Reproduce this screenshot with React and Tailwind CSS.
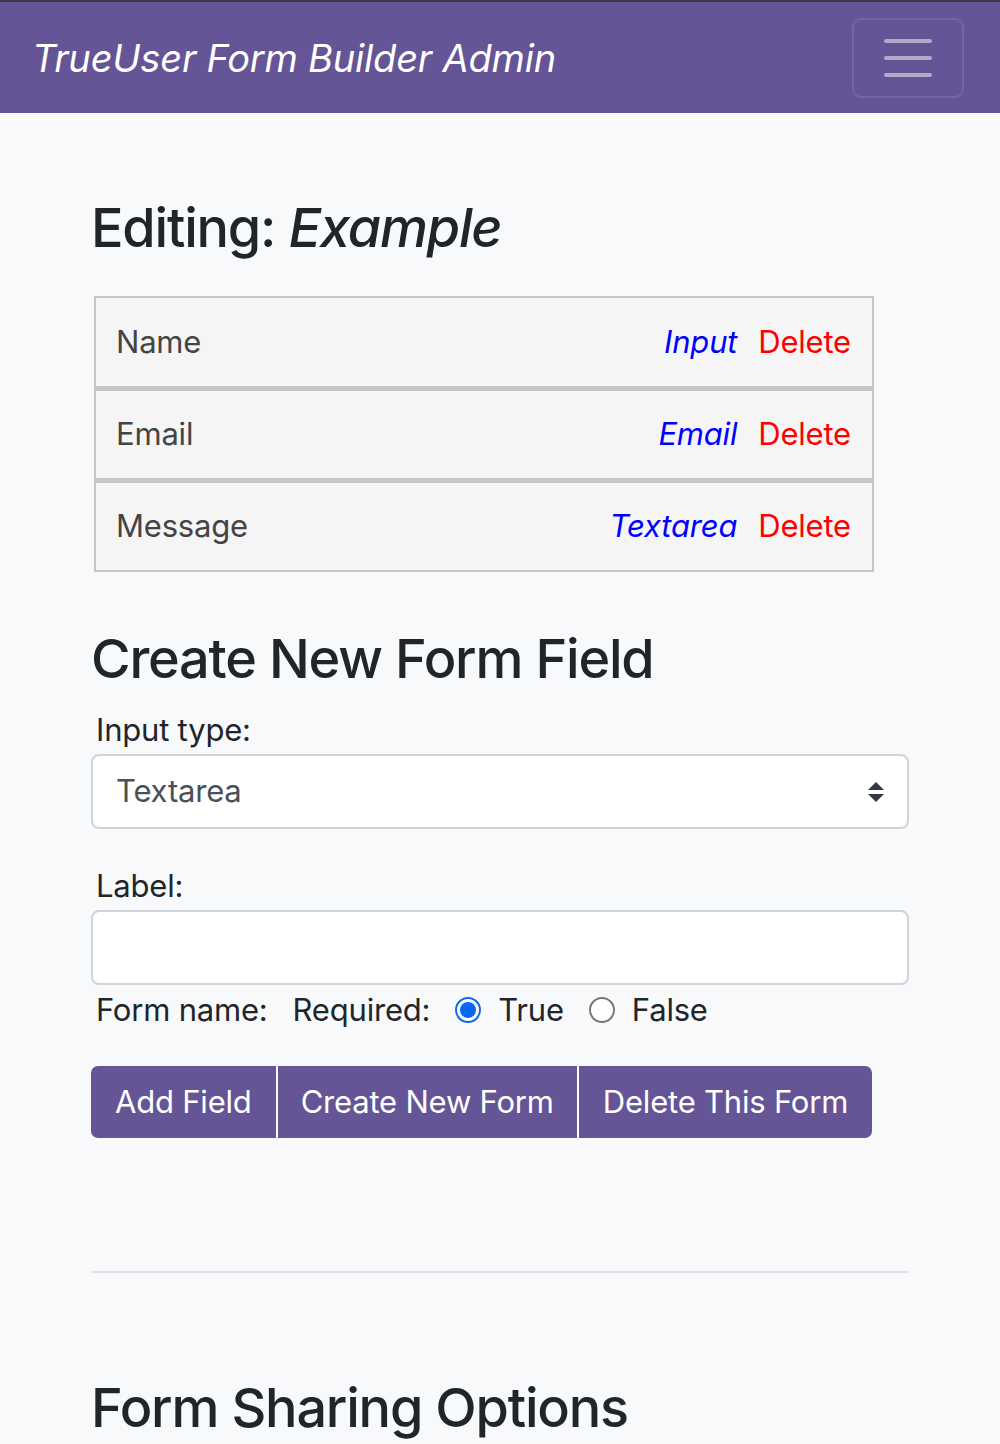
import React from "react";

const rows = [
  { name: "Name", type: "Input" },
  { name: "Email", type: "Email" },
  { name: "Message", type: "Textarea" },
];

export default function App() {
  return (
    <div className="min-h-[1444px] bg-[#f8f9fa] text-[#212529]" style={{ fontFamily: "Inter, 'Noto Sans', sans-serif" }}>
      <nav className="flex h-[113px] items-center justify-between border-t-2 border-[#3d3b48] bg-[#655597] pl-[32px] pr-[36px]">
        <span className="text-[38px] italic leading-none text-white tracking-[-0.2px]">TrueUser Form Builder Admin</span>
        <button className="flex h-[80px] w-[112px] flex-col items-center justify-center gap-[13px] rounded-[9px] border-2 border-white/10">
          <span className="block h-[4px] w-[48px] rounded-full bg-white/50" />
          <span className="block h-[4px] w-[48px] rounded-full bg-white/50" />
          <span className="block h-[4px] w-[48px] rounded-full bg-white/50" />
        </button>
      </nav>

      <main className="px-[91px]">
        <h1 className="mt-[80px] text-[54px] font-medium leading-[70px] tracking-[-1.2px]">
          Editing: <em>Example</em>
        </h1>

        <div className="ml-[3px] mt-[33px] w-[780px]">
          {rows.map((r, i) => (
            <div
              key={r.name}
              className={`flex h-[92px] items-center justify-between border-2 border-[#c6c6c6] bg-[#f5f5f5] pl-[20px] pr-[21px] text-[31px] tracking-[-0.2px] text-[#444] ${i > 0 ? "border-t-[3px]" : ""}`}
            >
              <span>{r.name}</span>
              <span className="flex items-center gap-[21px]">
                <span className="italic text-[#0000ff]">{r.type}</span>
                <span className="text-[#ff0000]">Delete</span>
              </span>
            </div>
          ))}
        </div>

        <h2 className="mt-[52px] text-[54px] font-medium leading-[70px] tracking-[-1.2px]">Create New Form Field</h2>

        <label className="ml-[5px] mt-[12px] block text-[31px] leading-[48px] tracking-[-0.2px]">Input type:</label>
        <div className="flex h-[75px] items-center justify-between rounded-[8px] border-2 border-[#ced4da] bg-white pl-[23px] pr-[22px] text-[31px] tracking-[-0.2px] text-[#495057]">
          <span>Textarea</span>
          <svg width="18" height="22" viewBox="0 0 18 22" className="mt-[1px]">
            <path d="M9 1 L17 9 L1 9 Z" fill="#343a40" />
            <path d="M1 13 L17 13 L9 21 Z" fill="#343a40" />
          </svg>
        </div>

        <label className="ml-[5px] mt-[33px] block text-[31px] leading-[48px] tracking-[-0.2px]">Label:</label>
        <div className="h-[75px] rounded-[8px] border-2 border-[#ced4da] bg-white" />

        <div className="ml-[5px] mt-[1px] flex h-[48px] items-center text-[31px] tracking-[-0.2px]">
          <span>Form name:</span>
          <span className="ml-[25px]">Required:</span>
          <span className="ml-[25px] flex h-[26px] w-[26px] items-center justify-center rounded-full border-2 border-[#0a66f5] bg-white">
            <span className="block h-[16px] w-[16px] rounded-full bg-[#0a66f5]" />
          </span>
          <span className="ml-[17px]">True</span>
          <span className="ml-[25px] block h-[26px] w-[26px] rounded-full border-2 border-[#767676] bg-white" />
          <span className="ml-[17px]">False</span>
        </div>

        <div className="mt-[32px] flex">
          <div className="flex h-[72px] overflow-hidden rounded-[7px] text-[31px] tracking-[-0.2px] text-white">
            <span className="flex items-center bg-[#655597] pl-[24px] pr-[24px]">Add Field</span>
            <span className="flex items-center border-l-2 border-white bg-[#655597] px-[23px]">Create New Form</span>
            <span className="flex items-center border-l-2 border-white bg-[#655597] px-[24px]">Delete This Form</span>
          </div>
        </div>

        <hr className="mt-[133px] border-t-2 border-[#dfe1e4]" />

        <h2 className="mt-[100px] text-[54px] font-medium leading-[70px] tracking-[-1.2px]">Form Sharing Options</h2>
      </main>
    </div>
  );
}
